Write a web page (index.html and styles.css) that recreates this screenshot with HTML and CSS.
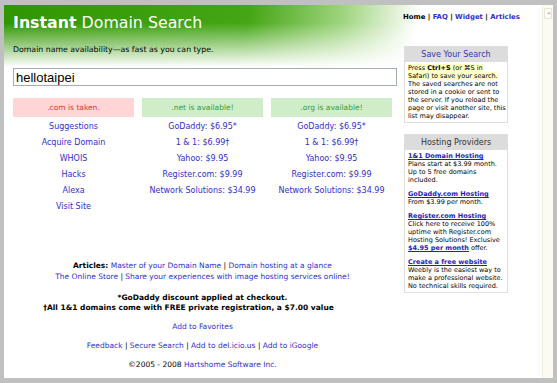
FILE: index.html
```html
<!DOCTYPE html>
<html lang="en">
<head>
    <meta charset="UTF-8">
    <title>Instant Domain Search</title>
    <link rel="stylesheet" href="styles.css">
</head>
<body>
    <div class="frame">
        <div class="page">
            <header class="masthead">
                <h1><b>Instant</b> Domain Search</h1>
                <nav class="topnav">Home | <a href="#">FAQ</a> | <a href="#">Widget</a> | <a href="#">Articles</a></nav>
            </header>

            <div class="layout">
                <main class="search">
                    <p class="tagline">Domain name availability&mdash;as fast as you can type.</p>
                    <input class="query" type="text" value="hellotaipei">

                    <section class="results">
                        <div class="result">
                            <div class="status taken">.com is taken.</div>
                            <ul class="links">
                                <li><a href="#">Suggestions</a></li>
                                <li><a href="#">Acquire Domain</a></li>
                                <li><a href="#">WHOIS</a></li>
                                <li><a href="#">Hacks</a></li>
                                <li><a href="#">Alexa</a></li>
                                <li><a href="#">Visit Site</a></li>
                            </ul>
                        </div>
                        <div class="result">
                            <div class="status free">.net is available!</div>
                            <ul class="links">
                                <li><a href="#">GoDaddy: $6.95*</a></li>
                                <li><a href="#">1 &amp; 1: $6.99&dagger;</a></li>
                                <li><a href="#">Yahoo: $9.95</a></li>
                                <li><a href="#">Register.com: $9.99</a></li>
                                <li><a href="#">Network Solutions: $34.99</a></li>
                            </ul>
                        </div>
                        <div class="result">
                            <div class="status free">.org is available!</div>
                            <ul class="links">
                                <li><a href="#">GoDaddy: $6.95*</a></li>
                                <li><a href="#">1 &amp; 1: $6.99&dagger;</a></li>
                                <li><a href="#">Yahoo: $9.95</a></li>
                                <li><a href="#">Register.com: $9.99</a></li>
                                <li><a href="#">Network Solutions: $34.99</a></li>
                            </ul>
                        </div>
                    </section>

                    <footer class="notes">
                        <p class="articles"><b>Articles:</b> <a href="#">Master of your Domain Name</a> | <a href="#">Domain hosting at a glance</a><br>
                        <a href="#">The Online Store</a> | <a href="#">Share your experiences with image hosting services online!</a></p>
                        <p class="fine">*GoDaddy discount applied at checkout.<br>
                        <span class="offset">&dagger;All 1&amp;1 domains come with FREE private registration, a $7.00 value</span></p>
                        <p><a href="#">Add to Favorites</a></p>
                        <p><a href="#">Feedback</a> | <a href="#">Secure Search</a> | <a href="#">Add to del.icio.us</a> | <a href="#">Add to iGoogle</a></p>
                        <p>&copy;2005 - 2008 <a href="#">Hartshome Software Inc.</a></p>
                    </footer>
                </main>

                <aside class="sidebar">
                    <div class="panel">
                        <h2 class="save-title">Save Your Search</h2>
                        <div class="panel-body">
                            <span class="hint">Press <b>Ctrl+S</b> (or &#8984;S in Safari) to save your search.</span>
                            The saved searches are not stored in a cookie or sent to the server. If you reload the page or visit another site, this list may disappear.
                        </div>
                    </div>
                    <div class="panel">
                        <h2>Hosting Providers</h2>
                        <div class="panel-body">
                            <p><a href="#">1&amp;1 Domain Hosting</a><br>Plans start at $3.99 month. Up to 5 free domains included.</p>
                            <p><a href="#">GoDaddy.com Hosting</a><br>From $3.99 per month.</p>
                            <p><a href="#">Register.com Hosting</a><br>Click here to receive 100% uptime with Register.com Hosting Solutions! Exclusive <a href="#">$4.95 per month</a> offer.</p>
                            <p><a href="#">Create a free website</a><br>Weebly is the easiest way to make a professional website. No technical skills required.</p>
                        </div>
                    </div>
                </aside>
            </div>
        </div>
        <div class="scrollbar">
            <span class="arrow"></span>
        </div>
    </div>
</body>
</html>
```

FILE: styles.css
```css
body {
    margin: 0;
    background-color: #c0c0c0;
    font-family: 'DejaVu Sans', Verdana, sans-serif;
    color: #000;
}

a {
    color: #3030c8;
    text-decoration: none;
}

.frame {
    display: flex;
    height: 373px;
    margin: 5px 4px 5px 4px;
    background-color: #fff;
    overflow: hidden;
}

.page {
    flex: 1;
    padding-left: 9px;
    background:
        linear-gradient(to bottom, rgba(255, 255, 255, 0) 18px, #fff 62px) no-repeat,
        linear-gradient(100deg, #2f9600 0, #45a615 45%, #9fd47f 62%, #fff 76%) no-repeat;
    background-size: 100% 62px;
}

.masthead {
    display: grid;
    grid-template-columns: 384px 1fr;
    column-gap: 7px;
    height: 36px;
}

.masthead h1 {
    margin: 0;
    align-self: center;
    font-size: 15.8px;
    line-height: 20px;
    font-weight: normal;
    color: #fff;
}

.topnav {
    margin-top: 8px;
    margin-left: -1px;
    font-size: 6.9px;
    line-height: 9px;
    font-weight: bold;
}

.layout {
    display: grid;
    grid-template-columns: 384px 104px;
    column-gap: 7px;
}

.tagline {
    margin: 4px 0 0;
    font-size: 7.8px;
    line-height: 10px;
}

.query {
    display: block;
    box-sizing: border-box;
    width: 384px;
    height: 18px;
    margin-top: 13px;
    padding: 0 2px;
    border: 1px solid #a5acb2;
    font-family: 'Liberation Sans', Arial, sans-serif;
    font-size: 13px;
    color: #000;
}

.results {
    display: grid;
    grid-template-columns: repeat(3, 121px);
    column-gap: 8px;
    margin-top: 12px;
}

.status {
    height: 19px;
    line-height: 19px;
    text-align: center;
    font-size: 7.5px;
}

.status.taken {
    background-color: #ffd5d5;
    color: #d83a3a;
}

.status.free {
    background-color: #cfedc9;
    color: #3a9a3a;
}

.links {
    list-style: none;
    margin: 0;
    padding: 2px 0 0;
    text-align: center;
    font-size: 8px;
    line-height: 16px;
}

.notes {
    width: 379px;
    margin-top: 45px;
    text-align: center;
    font-size: 7.5px;
    line-height: 11px;
}

.notes p {
    margin: 0 0 8px;
}

.notes .articles {
    margin-bottom: 11px;
}

.notes .fine {
    font-weight: bold;
    line-height: 10px;
}

.notes .offset {
    margin-right: 28px;
}

.sidebar {
    margin-top: 5px;
}

.panel {
    border: 1px solid #dedede;
    margin-bottom: 11px;
}

.panel h2 {
    margin: 0;
    height: 15px;
    line-height: 15px;
    background-color: #dcdcdc;
    text-align: center;
    font-size: 8px;
    font-weight: normal;
    color: #333;
}

.panel h2.save-title {
    color: #3535b0;
}

.panel-body {
    padding: 2px 1px 2px 3px;
    font-size: 6.5px;
    line-height: 8px;
}

.panel-body p {
    margin: 0 0 6px;
}

.panel-body p:last-child {
    margin-bottom: 0;
}

.panel-body a {
    color: #2222bb;
    font-weight: bold;
    text-decoration: underline;
}

.hint {
    background-color: #ffffc8;
}

.scrollbar {
    width: 10px;
    background-color: #fbfbf4;
    border-left: 1px solid #efefe6;
}

.arrow {
    display: block;
    height: 9px;
    margin: 3px 1px 0;
    border: 1px solid #e6e6de;
    position: relative;
}

.arrow::after {
    content: '';
    position: absolute;
    left: 2px;
    top: 3px;
    border-left: 2px solid transparent;
    border-right: 2px solid transparent;
    border-bottom: 2px solid #b8b8b0;
}
```
